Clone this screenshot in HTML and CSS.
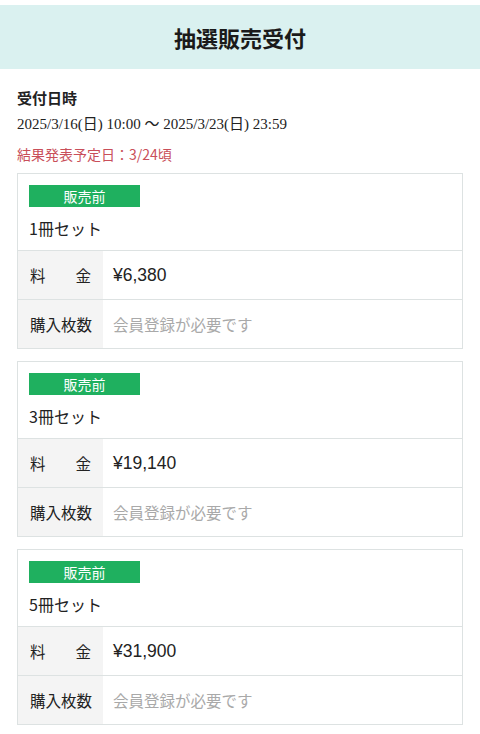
FILE: index.html
```html
<!DOCTYPE html>
<html lang="ja">
<head>
<meta charset="utf-8">
<link rel="stylesheet" href="styles.css">
</head>
<body>
<header class="page-head"><h1>抽選販売受付</h1></header>
<main class="content">
  <h2 class="sec-title">受付日時</h2>
  <p class="period">2025/3/16(日) 10:00 〜 2025/3/23(日) 23:59</p>
  <p class="notice">結果発表予定日：3/24頃</p>

  <section class="card">
    <div class="card-top">
      <span class="badge">販売前</span>
      <div class="item-name">1冊セット</div>
    </div>
    <div class="row"><div class="label"><span>料</span><span>金</span></div><div class="value price">¥6,380</div></div>
    <div class="row"><div class="label"><span>購入枚数</span></div><div class="value muted">会員登録が必要です</div></div>
  </section>

  <section class="card">
    <div class="card-top">
      <span class="badge">販売前</span>
      <div class="item-name">3冊セット</div>
    </div>
    <div class="row"><div class="label"><span>料</span><span>金</span></div><div class="value price">¥19,140</div></div>
    <div class="row"><div class="label"><span>購入枚数</span></div><div class="value muted">会員登録が必要です</div></div>
  </section>

  <section class="card">
    <div class="card-top">
      <span class="badge">販売前</span>
      <div class="item-name">5冊セット</div>
    </div>
    <div class="row"><div class="label"><span>料</span><span>金</span></div><div class="value price">¥31,900</div></div>
    <div class="row"><div class="label"><span>購入枚数</span></div><div class="value muted">会員登録が必要です</div></div>
  </section>
</main>
</body>
</html>
```
FILE: styles.css
```css
* { box-sizing: border-box; }
html, body { margin: 0; padding: 0; background: #fff; }
body {
  font-family: "Noto Sans CJK JP", "Noto Sans", sans-serif;
  color: #222;
}
.page-head {
  margin-top: 5px;
  height: 64px;
  background: #daf1f0;
  display: flex;
  align-items: center;
  justify-content: center;
}
.page-head h1 {
  margin: 0;
  font-size: 22px;
  font-weight: 700;
  letter-spacing: 0;
  color: #1a1a1a;
}
.content { padding: 18px 17px 0; }
.sec-title {
  margin: 0;
  font-size: 15px;
  line-height: 22px;
  font-weight: 700;
}
.period {
  margin: 4px 0 0;
  font-family: "Liberation Serif", "Noto Sans CJK JP", serif;
  font-size: 15px;
  line-height: 22px;
  color: #222;
}
.notice {
  margin: 8px 0 0;
  font-size: 14px;
  line-height: 22px;
  color: #c94f5a;
}
.card {
  margin-top: 8px;
  border: 1px solid #dde2e2;
  background: #fff;
}
.card + .card { margin-top: 12px; }
.card-top { padding: 11px 11px 10px; }
.badge {
  display: block;
  width: 111px;
  height: 22px;
  background: #1fb05f;
  color: #fff;
  font-size: 14px;
  line-height: 22px;
  text-align: center;
}
.item-name {
  margin-top: 9px;
  font-size: 16px;
  line-height: 24px;
}
.row {
  display: flex;
  border-top: 1px solid #dde2e2;
  height: 49px;
}
.label {
  width: 85px;
  flex: none;
  background: #f4f4f4;
  padding: 0 12px;
  display: flex;
  align-items: center;
  justify-content: space-between;
  font-size: 15.5px;
  white-space: nowrap;
}
.value {
  flex: 1;
  display: flex;
  align-items: center;
  padding-left: 10px;
}
.price { font-size: 17.5px; font-family: "Liberation Sans", "Noto Sans CJK JP", sans-serif; }
.muted { color: #a9a9a9; font-size: 15.5px; }
```
